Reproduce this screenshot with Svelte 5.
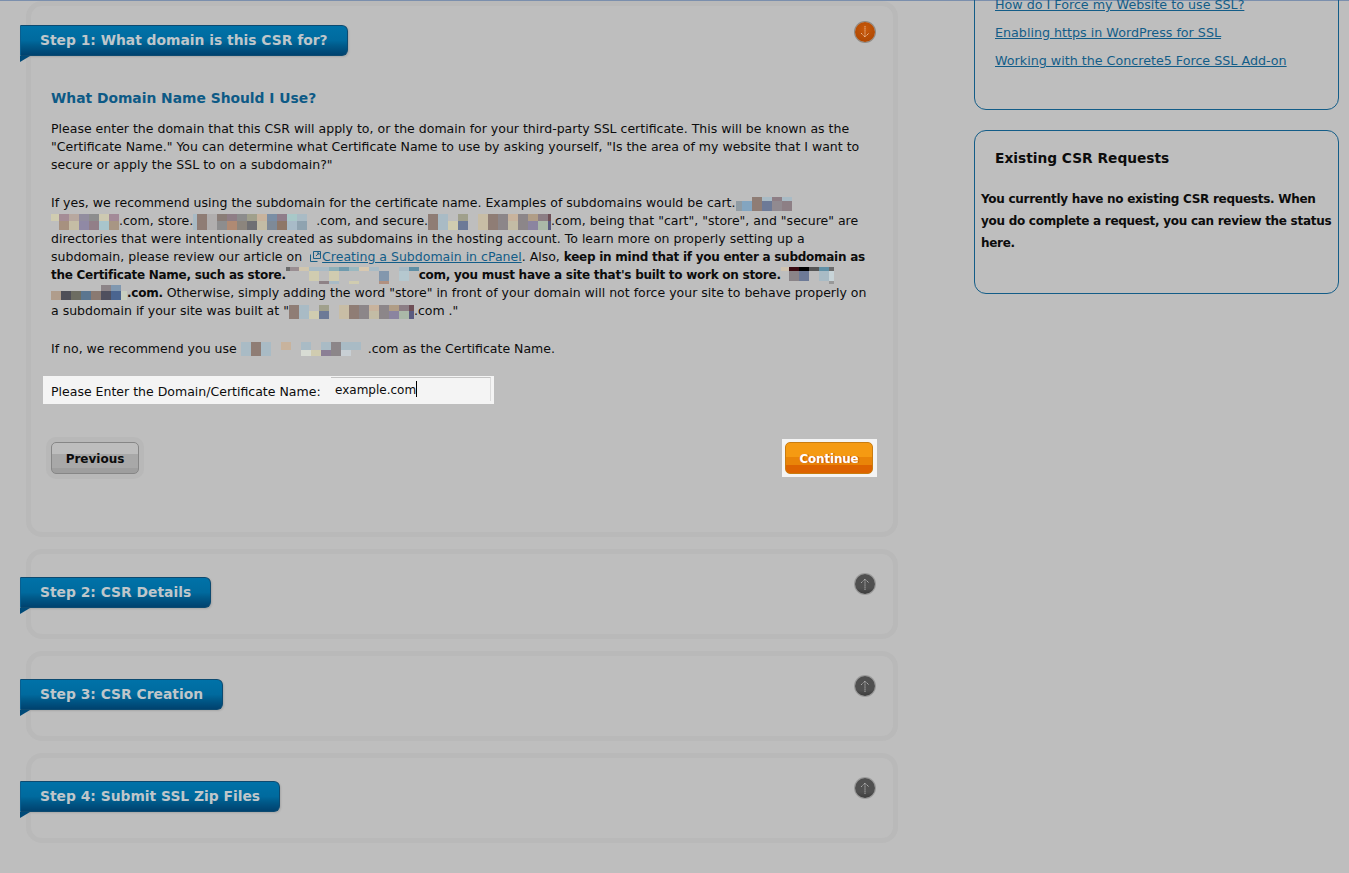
<script>
  const B = '#a9bbc5', R = '#8f7d75', T = '#d0ccb0', G = '#8c8689', N = '#6d7a97', S = '#c8bda5';
  const cart = { top: 3, rows: [
    { h: 4, c: [['', 6], '', R, B, '#8e7e85', B] },
    { h: 10, c: [['#8f9ba3', 6], '#83a5c0', R, N, '#918a90', '#8d7f85'] }
  ] };
  const d1 = { top: 2, rows: [
    { h: 7, c: [[T, 8], '#a58d96', '#b8a89f', '#928d9f', '#8d8d8e', '#cdc9b1', '#a38a98'] },
    { h: 9, c: [['', 8], '#a7917f', '#c5bda5', '#9089a5', '#927f88', '#a8c5cc', '#a89684'] }
  ] };
  const d2 = { top: 2, rows: [
    { h: 7, c: [[B, 4], R, '#b0aeae', '#8a7d77', '#8f7e86', '#8c8c8c', '#a0a08c', '#c8b39d', '#7a8ea5', '#8f7d8a', '#a8c8c8', B, ['', 9]] },
    { h: 9, c: [[B, 4], R, '#b0aeae', '#8d8d8e', '#b08a73', '#8c857d', '#6f6f73', '#c3bca5', '#7e8a98', '#8e7768', '#a8bbc8', '#8fa3b0', ['', 9]] }
  ] };
  const d3 = { top: 2, rows: [
    { h: 7, c: [R, B, '', '#a0a08c', '', S, R, G, '#c8b39d', G, '#b09d86', '#8c7e85', ['#6e4e55', 3]] },
    { h: 9, c: [R, B, T, N, '', S, R, G, '#c3bca5', G, '#8b84a0', '#aab8a8', ['#5a5a80', 3]] }
  ] };
  const d4 = { top: 1, rows: [
    { h: 4, c: [['#6a6a6a', 4], ['#9a8e92', 9], '#d1c6ae', B, B, '#8eb0b8', '#6f9bae', '#9ab8c0', '#d8c8b0', B, '', '', B, '#5f8fa5'] },
    { h: 10, c: [['', 4], ['', 9], '', T, '', T, '', '', '', '', '#8397ad', '', '#b5c8cf', ''] },
    { h: 3, c: [['', 4], ['', 9], '', '', '#8e8286', B, '', T, '', '', '#b09080', '', '', ''] }
  ] };
  const d5 = { top: 1, rows: [
    { h: 4, c: [['#d0c4b0', 8], '#3a0a10', '#000', '#555', '#5f8fa5', ['#6a6a6a', 5]] },
    { h: 10, c: [['', 8], '#8a8488', N, '', B, ['#c8d4d8', 5]] },
    { h: 3, c: [['', 8], '', '', '', '', ['#999', 5]] }
  ] };
  const d6 = { top: 1, rows: [
    { h: 6, c: ['', '', '', '', '', '#8c8488', '#8098b0', ['', 6]] },
    { h: 9, c: ['#b09d8c', '#4f4f58', '#6d6d62', '#5b7690', '#8a7a72', '#4f4f5e', '#4a6590', ['#c8cfc0', 6]] }
  ] };
  const d7 = { top: 3, rows: [
    { h: 6, c: [R, B, '', '#a0a08c', '', S, R, G, '#c8b39d', G, '#b09d86', '#8c7e85', ['#6e4e55', 5]] },
    { h: 8, c: [R, B, T, N, '', S, R, G, '#c3bca5', G, '#8b84a0', '#aab8a8', ['#5a5a80', 5]] }
  ] };
  const d8 = { top: 2, rows: [
    { h: 8, c: [B, R, B, '', '#c8b39d', '', B, '', B, G, B, B, ['', 7]] },
    { h: 6, c: [B, R, B, '', '', '', '#d8dcd4', T, '#8b7f95', G, '#c8cfd4', '', ['', 7]] }
  ] };
  const steps = ['Step 2: CSR Details', 'Step 3: CSR Creation', 'Step 4: Submit SSL Zip Files'];
  const links = ['How do I Force my Website to use SSL?', 'Enabling https in WordPress for SSL', 'Working with the Concrete5 Force SSL Add-on'];
  const cw = (x) => (Array.isArray(x) ? x[1] : 10);
  const cc = (x) => (Array.isArray(x) ? x[0] : x) || 'transparent';
</script>

{#snippet mos(m)}
  <span class="mos" style="margin-top:{m.top}px">
    {#each m.rows as r}
      <span class="mrow" style="height:{r.h}px">
        {#each r.c as x}<span class="cell" style="width:{cw(x)}px;background:{cc(x)}"></span>{/each}
      </span>
    {/each}
  </span>
{/snippet}

{#snippet ribbon(text)}
  <div class="ribbon"><h3>{text}</h3><span class="fold"></span></div>
{/snippet}

<div class="page">
  <div class="topline"></div>
  <div class="cols">
    <main class="left">
      <section class="panel first">
        {@render ribbon('Step 1: What domain is this CSR for?')}
        <span class="dot orange">
          <svg viewBox="0 0 20 20" width="20" height="20"><path d="M10 4v11M6 11l4 4 4-4" fill="none" stroke="#e8b48c" stroke-width="1" stroke-dasharray="1.5 .6"/></svg>
        </span>
        <div class="content">
          <h2>What Domain Name Should I Use?</h2>
          <p>Please enter the domain that this CSR will apply to, or the domain for your third-party SSL certificate. This will be known as the<br>"Certificate Name." You can determine what Certificate Name to use by asking yourself, "Is the area of my website that I want to<br>secure or apply the SSL to on a subdomain?"</p>
          <p>If yes, we recommend using the subdomain for the certificate name. Examples of subdomains would be cart.{@render mos(cart)}<br>{@render mos(d1)}.com, store.{@render mos(d2)}.com, and secure.{@render mos(d3)}.com, being that "cart", "store", and "secure" are<br>directories that were intentionally created as subdomains in the hosting account. To learn more on properly setting up a<br>subdomain, please review our article on <svg class="ext" viewBox="0 0 11 11" width="11" height="11"><path d="M3.5.5h7v7h-7zM.5 3.5v7h7M6 5l3-3M7 2h2v2" fill="none" stroke="#1a5f86"/></svg><a href="#a">Creating a Subdomain in cPanel</a>. Also, <b>keep in mind that if you enter a subdomain as<br>the Certificate Name, such as store.{@render mos(d4)}com, you must have a site that's built to work on store.{@render mos(d5)}<br>{@render mos(d6)}.com.</b> Otherwise, simply adding the word "store" in front of your domain will not force your site to behave properly on<br>a subdomain if your site was built at "{@render mos(d7)}.com ."</p>
          <p>If no, we recommend you use {@render mos(d8)}.com as the Certificate Name.</p>
          <div class="form">
            <label for="cn">Please Enter the Domain/Certificate Name:</label>
            <div class="input" id="cn">example.com<span class="caret"></span></div>
          </div>
          <div class="actions">
            <button class="btn prev">Previous</button>
            <span class="cwrap"><button class="btn cont">Continue</button></span>
          </div>
        </div>
      </section>
      {#each steps as s}
        <section class="panel small">
          {@render ribbon(s)}
          <span class="dot gray">
            <svg viewBox="0 0 20 20" width="20" height="20"><path d="M10 16V5M6 9l4-4 4 4" fill="none" stroke="#a8a8a8" stroke-width="1" stroke-dasharray="1.5 .6"/></svg>
          </span>
        </section>
      {/each}
    </main>
    <aside class="right">
      <div class="card links">
        {#each links as l}<a href="#a">{l}</a>{/each}
      </div>
      <div class="card req">
        <h4>Existing CSR Requests</h4>
        <p>You currently have no existing CSR requests. When you do complete a request, you can review the status here.</p>
      </div>
    </aside>
  </div>
</div>

<style>
  :global(body) { margin: 0; background: #bebebe; }
  .page { height: 873px; overflow: hidden; font-family: "DejaVu Sans", Verdana, sans-serif; font-size: 12.53px; color: #0c0c0c; background: #bebebe; }
  .topline { height: 1px; background: #7b8fad; }
  .cols { display: flex; align-items: flex-start; padding-left: 26px; }
  .left { width: 872px; flex: none; display: flex; flex-direction: column; gap: 12px; }
  .right { width: 365px; flex: none; margin-left: 76px; margin-top: -51px; display: flex; flex-direction: column; gap: 20px; }

  .panel { position: relative; box-sizing: border-box; border: 5px solid #b9b9b9; border-radius: 16px; padding-top: 19px; }
  .panel.first { height: 536px; }
  .panel.small { height: 90px; padding-top: 23px; }

  .ribbon { position: relative; display: inline-block; margin-left: -11px; height: 31px; box-sizing: border-box; border: 1px solid #0d4a70; border-left-color: #0a5f90; border-radius: 0 6px 6px 0; background: linear-gradient(#0072a8 0%, #006a9e 50%, #005a8a 68%, #00426f 100%); box-shadow: 1px 1px 2px rgba(0, 0, 0, .12); }
  .ribbon h3 { margin: 0; padding: 0 19px; font-size: 13.85px; font-weight: 700; line-height: 29px; color: #bfc6ca; white-space: nowrap; }
  .fold { position: absolute; left: -1px; top: 30px; width: 0; height: 0; border-top: 6px solid #004a78; border-left: 10px solid transparent; transform: scaleX(-1); }

  .dot { position: absolute; right: 18px; top: 16px; width: 20px; height: 20px; border-radius: 50%; line-height: 0; }
  .panel.small .dot { top: 20px; }
  .orange { background: radial-gradient(circle at 50% 35%, #c95a0b, #a84300); box-shadow: 0 0 0 1px #8f8a84; }
  .gray { background: linear-gradient(#505050 70%, #3c3c3c); box-shadow: 0 0 0 1px #9a9a9a; }

  .content { position: absolute; left: 20px; right: 20px; top: 83px; }
  h2 { margin: 0 0 13px; font-size: 13.85px; line-height: 18px; font-weight: 700; color: #0d5a86; }
  p { margin: 0; }
  .content p { line-height: 18px; margin-bottom: 20px; white-space: nowrap; }
  .content a { color: #135d88; }
  b { font-size: 12px; letter-spacing: -.26px; }
  .ext { vertical-align: -1px; margin: 0 1px 0 4px; }
  .mos { display: inline-block; vertical-align: top; }
  .mrow { display: flex; }
  .cell { display: block; flex: none; }

  .form { display: flex; align-items: flex-start; box-sizing: border-box; width: 451px; height: 28px; margin: -2px 0 0 -8px; background: #f4f4f4; padding-left: 8px; }
  .form label { line-height: 18px; margin-top: 7px; width: 280px; flex: none; white-space: nowrap; }
  .input { box-sizing: border-box; width: 160px; height: 24px; border-top: 1px solid #c4c4c4; border-right: 1px solid #dcdcdc; padding: 3px 0 0 4px; margin-top: 1px; font-size: 12px; line-height: 18px; }
  .caret { display: inline-block; width: 1px; height: 16px; background: #000; vertical-align: -3px; }

  .actions { display: flex; justify-content: space-between; align-items: center; margin: 35px -4px 0 0; }
  .btn { box-sizing: border-box; width: 88px; height: 32px; border-radius: 5px; font: 700 12px "DejaVu Sans", Verdana, sans-serif; cursor: pointer; padding: 2px 0 0; }
  .prev { border: 1px solid #868686; color: #0c0c0c; background: linear-gradient(#bdbdbd 0 36%, #a8a8a8 36% 85%, #9e9e9e 85%); box-shadow: 0 0 0 5px #b8b8b8; }
  .cwrap { display: block; padding: 3px 4px 3px 3px; background: #f4f4f4; line-height: 0; }
  .cont { border: 1px solid #c97c10; color: #fff; letter-spacing: -.2px; text-shadow: 1px 0 0 #c4500a; background: linear-gradient(#f59a12 0 48%, #e98408 48% 75%, #dd6300 75%); }

  .card { box-sizing: border-box; border: 1px solid #135d88; border-radius: 12px; }
  .links { height: 160px; padding-left: 20px; display: flex; flex-direction: column; align-items: flex-start; gap: 10px; font-size: 12.7px; }
  .links a { color: #135d88; line-height: 18px; }
  .links a:first-child { margin-top: 45px; }
  .req { height: 164px; padding: 18px 4px 0 6px; }
  .req h4 { margin: 0 0 21px 14px; font-size: 13.75px; line-height: 18px; font-weight: 700; }
  .req p { font-size: 12px; letter-spacing: -.28px; font-weight: 700; line-height: 22px; }
</style>
